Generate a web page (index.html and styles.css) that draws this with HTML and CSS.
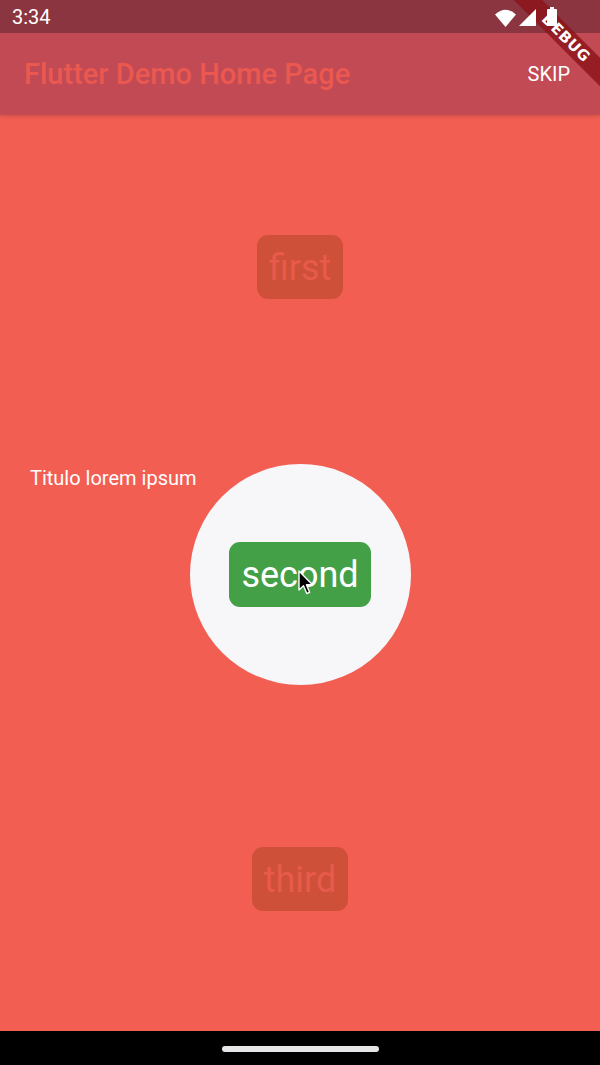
FILE: index.html
```html
<!DOCTYPE html>
<html>
<head>
<meta charset="utf-8">
<link rel="stylesheet" href="styles.css">
</head>
<body>
<div class="screen">
  <div class="status">
    <span class="time">3:34</span>
    <div class="status-icons">
      <svg class="wifi" width="21" height="18" viewBox="0 0 21 18"><path d="M0 5.5 Q10.5 -4 21 5.5 L10.5 18 Z" fill="#fff"/></svg>
      <svg class="signal" width="17" height="17" viewBox="0 0 17 17"><path d="M17 0 L17 17 L0 17 Z" fill="#fff"/></svg>
      <svg class="battery" width="10" height="19" viewBox="0 0 10 19"><rect x="3" y="0" width="4" height="2" fill="#fff"/><rect x="0" y="2" width="10" height="17" rx="1" fill="#fff"/></svg>
    </div>
  </div>
  <header class="appbar">
    <h1 class="title">Flutter Demo Home Page</h1>
    <span class="skip">SKIP</span>
  </header>
  <main class="content">
    <section class="slot">
      <div class="chip chip-dim">first</div>
    </section>
    <section class="slot slot-mid">
      <div class="spot">
        <div class="chip chip-green">second</div>
      </div>
      <p class="hint">Titulo lorem ipsum</p>
      <svg class="cursor" width="16" height="26" viewBox="0 0 16 26"><path d="M1 1 L1 20 L5.5 15.8 L8.8 23.5 L11.6 22.3 L8.4 14.8 L14.5 14.8 Z" fill="#000" stroke="#fff" stroke-width="1.4" stroke-linejoin="round"/></svg>
    </section>
    <section class="slot">
      <div class="chip chip-dim">third</div>
    </section>
  </main>
  <footer class="navbar"><span class="pill"></span></footer>
  <div class="banner-clip"><div class="banner">DEBUG</div></div>
</div>
</body>
</html>
```
FILE: styles.css
```css
* { box-sizing: border-box; }
html, body { margin: 0; padding: 0; }
body { font-family: Roboto, "Noto Sans", sans-serif; background: #000; }
.screen { position: relative; width: 600px; height: 1065px; display: flex; flex-direction: column; overflow: hidden; background: #f35e53; }
.status { height: 33px; background: #8a3540; display: flex; align-items: center; justify-content: space-between; padding: 0 43px 0 12px; color: #fff; }
.time { font-size: 20px; line-height: 1; margin-top: 1px; }
.status-icons { display: flex; align-items: center; gap: 3px; position: relative; z-index: 6; }
.wifi { margin-top: 2px; }
.signal { margin-top: 1px; }
.battery { margin-left: 8px; }
.appbar { height: 82px; background: #c24a54; display: flex; align-items: center; justify-content: space-between; padding: 0 30px 0 24px; box-shadow: 0 2px 3px rgba(0,0,0,0.12); position: relative; z-index: 1; }
.title { margin: 0; font-size: 29px; font-weight: 500; color: #ea5850; letter-spacing: 0; }
.skip { color: #fff; font-size: 20px; }
.content { flex: 1; display: flex; flex-direction: column; }
.slot { flex: 1; display: flex; align-items: center; justify-content: center; position: relative; }
.slot-mid { padding-top: 2px; }
.chip { font-size: 36px; line-height: 62px; height: 64px; padding: 2px 12px 0; border-radius: 11px; }
.chip-dim { background: #cf5038; color: #e85a4b; }
.chip-green { background: #43a047; color: #fff; height: 65px; line-height: 63px; }
.spot { width: 221px; height: 221px; border-radius: 50%; background: #f7f6f9; display: flex; align-items: center; justify-content: center; }
.hint { position: absolute; left: 30px; top: 46px; margin: 0; color: #fff; font-size: 20px; }
.cursor { position: absolute; left: 298px; top: 150px; }
.navbar { height: 34px; background: #000; display: flex; justify-content: center; padding-top: 15px; }
.pill { width: 157px; height: 6px; border-radius: 3px; background: #e6e6e8; }
.banner-clip { position: absolute; top: 0; right: 0; width: 120px; height: 120px; overflow: hidden; pointer-events: none; z-index: 5; }
.banner { position: absolute; left: -14px; top: 28px; width: 200px; height: 20px; background: rgba(140, 20, 26, 0.82); color: #fff; font-family: "DejaVu Sans", sans-serif; font-weight: bold; font-size: 15px; line-height: 20px; text-align: center; transform: rotate(45deg); letter-spacing: 0.5px; }
```
